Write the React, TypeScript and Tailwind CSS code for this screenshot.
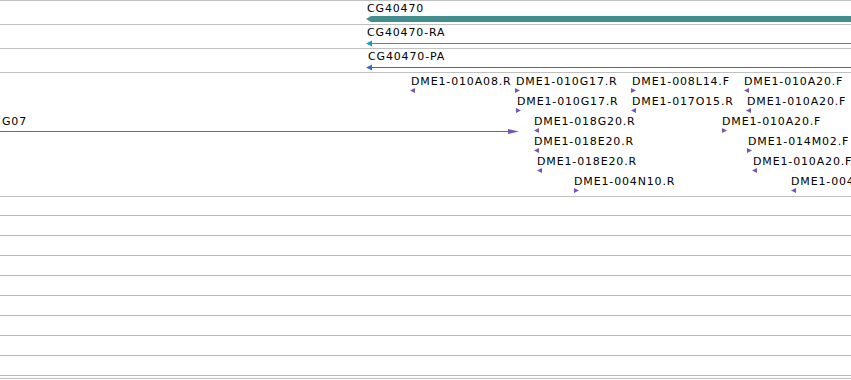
import React from "react";

const FONT = { fontFamily: '"DejaVu Sans", Verdana, sans-serif' };

type Feat = { label: string; x: number; row: number; tx: number; dir: "l" | "r" };

const feats: Feat[] = [
  { label: "DME1-010A08.R", x: 411, row: 0, tx: 410, dir: "l" },
  { label: "DME1-010G17.R", x: 516, row: 0, tx: 515, dir: "r" },
  { label: "DME1-008L14.F", x: 632, row: 0, tx: 631, dir: "r" },
  { label: "DME1-010A20.F", x: 744, row: 0, tx: 744, dir: "l" },
  { label: "DME1-010G17.R", x: 517, row: 1, tx: 516, dir: "r" },
  { label: "DME1-017O15.R", x: 632, row: 1, tx: 631, dir: "l" },
  { label: "DME1-010A20.F", x: 747, row: 1, tx: 746, dir: "l" },
  { label: "DME1-018G20.R", x: 534, row: 2, tx: 534, dir: "l" },
  { label: "DME1-010A20.F", x: 722, row: 2, tx: 722, dir: "r" },
  { label: "DME1-018E20.R", x: 534, row: 3, tx: 534, dir: "l" },
  { label: "DME1-014M02.F", x: 748, row: 3, tx: 747, dir: "r" },
  { label: "DME1-018E20.R", x: 537, row: 4, tx: 537, dir: "l" },
  { label: "DME1-010A20.F", x: 753, row: 4, tx: 752, dir: "l" },
  { label: "DME1-004N10.R", x: 574, row: 5, tx: 574, dir: "r" },
  { label: "DME1-004N10.R", x: 791, row: 5, tx: 791, dir: "l" },
];

function Tri({ dir, color }: { dir: "l" | "r"; color: string }) {
  return (
    <svg width="5" height="5" viewBox="0 0 5 5" className="block">
      {dir === "l" ? (
        <polygon points="0,2.5 5,0 5,5" fill={color} />
      ) : (
        <polygon points="0,0 5,2.5 0,5" fill={color} />
      )}
    </svg>
  );
}

function GeneTrack({ label, color, kind, labelLeft }: { label: string; color: string; kind: "bar" | "line"; labelLeft: number }) {
  return (
    <div className="relative h-[24px] shrink-0 border-t border-[#c0c0c0]">
      <span className="absolute top-[1px] leading-[13px] whitespace-nowrap" style={{ left: labelLeft }}>
        {label}
      </span>
      {kind === "bar" ? (
        <svg className="absolute left-[366px] top-[15px]" width="485" height="6">
          <polygon points="0,3 5,0 485,0 485,6 5,6" fill={color} />
        </svg>
      ) : (
        <svg className="absolute left-[366px] top-[15px]" width="485" height="7">
          <line x1="3" y1="3.5" x2="485" y2="3.5" stroke={color} strokeWidth="1" />
          <polygon points="0,3.5 6,0.5 6,6.5" fill={color} />
        </svg>
      )}
    </div>
  );
}

export default function App() {
  const purple = "#7556b3";
  return (
    <div className="flex flex-col w-[851px] h-[380px] bg-white overflow-hidden text-[11px] text-black tracking-[0.85px]" style={FONT}>
      <GeneTrack label="CG40470" color="#438f8f" kind="bar" labelLeft={367} />
      <GeneTrack label="CG40470-RA" color="#1e9cbd" kind="line" labelLeft={367} />
      <GeneTrack label="CG40470-PA" color="#3a6cc6" kind="line" labelLeft={368} />
      {/* Track: features */}
      <div className="relative h-[124px] shrink-0 border-t border-[#c0c0c0]">
        <span className="absolute left-[2px] top-[42px] leading-[13px] whitespace-nowrap">G07</span>
        <svg className="absolute left-0 top-[55px]" width="520" height="7">
          <line x1="0" y1="3.5" x2="510" y2="3.5" stroke={purple} strokeWidth="1" />
          <polygon points="508,1 519,3.5 508,6" fill={purple} />
        </svg>
        {feats.map((f, i) => (
          <React.Fragment key={i}>
            <span
              className="absolute leading-[13px] whitespace-nowrap"
              style={{ left: f.x, top: 2 + f.row * 20 }}
            >
              {f.label}
            </span>
            <div className="absolute" style={{ left: f.tx, top: 15 + f.row * 20 }}>
              <Tri dir={f.dir} color={purple} />
            </div>
          </React.Fragment>
        ))}
      </div>
      <div className="shrink-0 border-t border-[#c0c0c0]" />
      <div className="flex flex-col shrink-0">
        <div className="h-[19px] border-b border-[#9bc0de]" />
        {Array.from({ length: 8 }).map((_, i) => (
          <div key={i} className="h-[20px] border-b border-[#9bc0de]" />
        ))}
        <div className="h-[3px] border-b border-[#c0c0c0]" />
      </div>
    </div>
  );
}
